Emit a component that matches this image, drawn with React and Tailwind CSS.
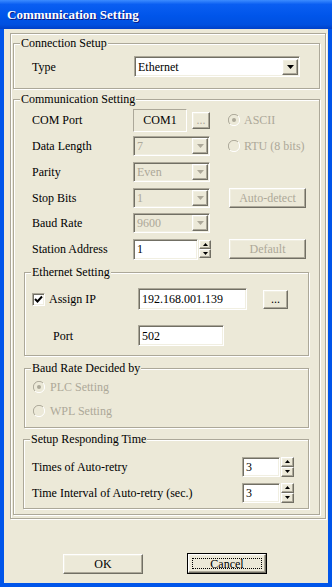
import React from "react"

const sunken = "border border-t-[#ACA899] border-l-[#ACA899] border-b-white border-r-white shadow-[inset_1px_1px_0_#716F64,inset_-1px_-1px_0_#F1EFE2]"
const raised = "border border-t-white border-l-white border-b-[#716F64] border-r-[#716F64] shadow-[inset_-1px_-1px_0_#ACA899,inset_1px_1px_0_#F1EFE2] bg-[#ECE9D8]"
const grayText = "text-[#ACA899]"

function Tri({ up, color = "#000", w = 7, h = 4 }) {
  return (
    <svg width={w} height={h} viewBox={`0 0 ${w} ${h}`}>
      {up
        ? <polygon points={`0,${h} ${w},${h} ${w / 2},0`} fill={color} />
        : <polygon points={`0,0 ${w},0 ${w / 2},${h}`} fill={color} />}
    </svg>
  )
}

function GroupBox({ label, className, children }) {
  return (
    <div className={"relative border border-[#ACA899] shadow-[inset_1px_1px_0_#fff,1px_1px_0_#fff] " + className}>
      <span className="absolute -top-[8px] left-[6px] bg-[#ECE9D8] px-[1px] leading-[14px] whitespace-nowrap text-black">{label}</span>
      {children}
    </div>
  )
}

function Combo({ value, disabled, className }) {
  return (
    <div className={`${sunken} flex items-center ${disabled ? "bg-[#ECE9D8] " + grayText : "bg-white"} ${className}`}>
      <span className="pl-[3px] flex-1">{value}</span>
      <div className={`${raised} w-[16px] h-[16px] mr-[1px] flex items-center justify-center`}>
        <Tri color={disabled ? "#ACA899" : "#000"} />
      </div>
    </div>
  )
}

function Spinner({ className }) {
  return (
    <div className={"flex flex-col " + className}>
      <div className={`${raised} flex-1 flex items-center justify-center`}><Tri up w={5} h={3} /></div>
      <div className={`${raised} flex-1 flex items-center justify-center`}><Tri w={5} h={3} /></div>
    </div>
  )
}

function Radio({ checked }) {
  return (
    <svg width="12" height="12" viewBox="0 0 12 12">
      <circle cx="6" cy="6" r="5.5" fill="#ECE9D8" />
      <path d="M10 2 A5.5 5.5 0 0 0 2 10" stroke="#ACA899" fill="none" />
      <path d="M2 10 A5.5 5.5 0 0 0 10 2" stroke="#fff" fill="none" />
      {checked && <circle cx="6" cy="6" r="2" fill="#ACA899" />}
    </svg>
  )
}

function Checkbox() {
  return (
    <div className={`${sunken} w-[13px] h-[13px] bg-white flex items-center justify-center`}>
      <svg width="9" height="9" viewBox="0 0 9 9">
        <path d="M1 4 L3.5 6.5 L8 1.5" stroke="#000" strokeWidth="2" fill="none" />
      </svg>
    </div>
  )
}

function Row({ label, h, children, right }) {
  return (
    <div className={"flex items-center " + h}>
      <span className="w-[101px]">{label}</span>
      <div className="w-[95px] flex items-center">{children}</div>
      <div className="flex items-center">{right}</div>
    </div>
  )
}

export default function App() {
  return (
    <div className="w-[332px] h-[587px] flex flex-col bg-[#0055EA] [font-family:'Liberation_Serif','Times_New_Roman',serif] text-[12px] text-black">
      <div className="h-[29px] shrink-0 flex items-center pl-[7px] bg-[linear-gradient(to_bottom,#3C8CFF_0%,#0A5EF2_15%,#0055EA_55%,#0050E0_85%,#0040C8_100%)]">
        <span className="text-white font-bold text-[13px] [text-shadow:1px_1px_0_#0A1883]">Communication Setting</span>
      </div>

      <div className="flex-1 mx-[4px] mb-[4px] bg-[#ECE9D8] flex flex-col">
        {/* outer etched panel */}
        <div className="ml-[6px] mt-[4px] w-[316px] h-[486px] border border-[#ACA899] shadow-[inset_1px_1px_0_#fff,1px_1px_0_#fff] flex flex-col">
          <GroupBox label="Connection Setup" className="ml-[2px] mt-[9px] w-[307px] h-[46px] shrink-0">
            <div className="flex items-center pl-[18px] pt-[12px]">
              <span className="w-[102px]">Type</span>
              <Combo value="Ethernet" className="w-[166px] h-[21px]" />
            </div>
          </GroupBox>

          <GroupBox label="Communication Setting" className="ml-[2px] mt-[10px] w-[307px] h-[416px] shrink-0 flex flex-col">
            <div className="pl-[18px] mt-[7px] flex flex-col">
              <Row label="COM Port" h="h-[26px]" right={<><Radio checked /><span className={"ml-[4px] " + grayText}>ASCII</span></>}>
                <div className="w-[54px] h-[23px] border border-t-[#ACA899] border-l-[#ACA899] border-b-white border-r-white flex items-center justify-center">COM1</div>
                <div className={`${raised} ml-[5px] w-[18px] h-[17px] flex items-center justify-center ${grayText}`}>...</div>
              </Row>
              <Row label="Data Length" h="h-[26px]" right={<><Radio /><span className={"ml-[4px] " + grayText}>RTU (8 bits)</span></>}>
                <Combo value="7" disabled className="w-[77px] h-[20px]" />
              </Row>
              <Row label="Parity" h="h-[26px]">
                <Combo value="Even" disabled className="w-[77px] h-[20px]" />
              </Row>
              <Row label="Stop Bits" h="h-[25px]" right={<div className={`${raised} ml-[1px] w-[77px] h-[20px] flex items-center justify-center ${grayText}`}>Auto-detect</div>}>
                <Combo value="1" disabled className="w-[77px] h-[20px]" />
              </Row>
              <Row label="Baud Rate" h="h-[25px]">
                <Combo value="9600" disabled className="w-[77px] h-[20px]" />
              </Row>
              <Row label="Station Address" h="h-[28px]" right={<div className={`${raised} ml-[1px] w-[77px] h-[20px] flex items-center justify-center ${grayText}`}>Default</div>}>
                <div className={`${sunken} bg-white w-[65px] h-[21px] flex items-center pl-[3px]`}>1</div>
                <Spinner className="ml-[1px] w-[12px] h-[18px]" />
              </Row>
            </div>

            <GroupBox label="Ethernet Setting" className="ml-[10px] mt-[9px] w-[285px] h-[84px] shrink-0">
              <div className="mt-[15px] h-[22px] flex items-center pl-[7px]">
                <div className="w-[106px] flex items-center">
                  <Checkbox />
                  <span className="ml-[4px]">Assign IP</span>
                </div>
                <div className={`${sunken} bg-white w-[109px] h-[22px] flex items-center pl-[3px]`}>192.168.001.139</div>
                <div className={`${raised} ml-[16px] w-[25px] h-[19px] flex items-center justify-center`}>...</div>
              </div>
              <div className="mt-[15px] h-[21px] flex items-center pl-[28px]">
                <span className="w-[85px]">Port</span>
                <div className={`${sunken} bg-white w-[86px] h-[21px] flex items-center pl-[3px]`}>502</div>
              </div>
            </GroupBox>

            <GroupBox label="Baud Rate Decided by" className={"ml-[10px] mt-[12px] w-[285px] h-[60px] shrink-0 " + grayText}>
              <div className="mt-[6px] flex flex-col pl-[8px]">
                <div className="h-[24px] flex items-center"><Radio checked /><span className="ml-[5px]">PLC Setting</span></div>
                <div className="h-[24px] flex items-center"><Radio /><span className="ml-[5px]">WPL Setting</span></div>
              </div>
            </GroupBox>

            <GroupBox label="Setup Responding Time" className="ml-[9px] mt-[11px] w-[286px] h-[70px] shrink-0">
              <div className="mt-[16px] flex flex-col gap-[5px] pl-[8px]">
                <div className="h-[21px] flex items-center">
                  <span className="w-[210px]">Times of Auto-retry</span>
                  <div className={`${sunken} bg-white w-[38px] h-[20px] flex items-center pl-[3px]`}>3</div>
                  <Spinner className="ml-[1px] w-[13px] h-[20px]" />
                </div>
                <div className="h-[21px] flex items-center">
                  <span className="w-[210px]">Time Interval of Auto-retry (sec.)</span>
                  <div className={`${sunken} bg-white w-[38px] h-[20px] flex items-center pl-[3px]`}>3</div>
                  <Spinner className="ml-[1px] w-[13px] h-[20px]" />
                </div>
              </div>
            </GroupBox>
          </GroupBox>
        </div>

        <div className="mt-[34px] ml-[59px] flex items-center">
          <div className={`${raised} w-[80px] h-[20px] flex items-center justify-center`}>OK</div>
          <div className="ml-[44px] w-[80px] h-[21px] border border-black flex">
            <div className={`${raised} flex-1 p-[3px] flex`}>
              <div className="flex-1 border border-dotted border-black flex items-center justify-center leading-none">Cancel</div>
            </div>
          </div>
        </div>
      </div>
    </div>
  )
}
